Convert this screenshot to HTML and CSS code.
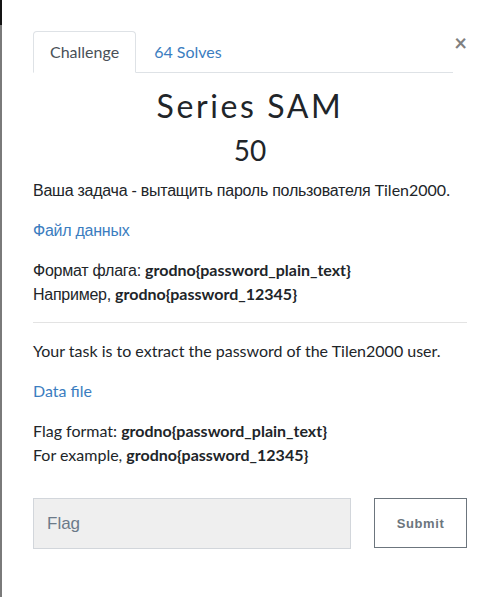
FILE: index.html
```html
<!DOCTYPE html>
<html lang="ru">
<head>
<meta charset="utf-8">
<title>Series SAM</title>
<link rel="stylesheet" href="styles.css">
</head>
<body>
<div class="modal">
  <div class="modal-header">
    <ul class="tabs">
      <li class="tab active">Challenge</li>
      <li class="tab"><a href="#">64 Solves</a></li>
    </ul>
    <button class="close" type="button">×</button>
  </div>
  <div class="modal-body">
    <h2 class="title">Series SAM</h2>
    <h3 class="value">50</h3>
    <div class="desc">
      <p><span class="cy">Ваша задача - вытащить пароль пользователя</span> Tilen2000.</p>
      <p><a href="#" class="cy">Файл данных</a></p>
      <p><span class="cy">Формат флага:</span> <strong>grodno{password_plain_text}</strong><br>
      <span class="cy">Например,</span> <strong>grodno{password_12345}</strong></p>
      <hr>
      <p>Your task is to extract the password of the Tilen2000 user.</p>
      <p><a href="#">Data file</a></p>
      <p>Flag format: <strong>grodno{password_plain_text}</strong><br>
      For example, <strong>grodno{password_12345}</strong></p>
    </div>
    <form class="submit-row">
      <input class="flag-input" type="text" placeholder="Flag">
      <button class="submit-btn" type="button">Submit</button>
    </form>
  </div>
</div>
</body>
</html>
```
FILE: styles.css
```css
html, body {
  margin: 0;
  padding: 0;
  height: 100%;
}
body {
  background: #fff;
  font-family: Lato, "Liberation Sans", Arial, sans-serif;
  font-size: 16px;
  line-height: 24px;
  color: #212529;
}
.modal {
  min-height: 100%;
  box-sizing: border-box;
  border-left: 2px solid #7a7a7a;
  background: #fff;
  padding: 31px 31px 0 31px;
  position: relative;
}
.modal::before {
  content: "";
  position: absolute;
  left: -2px;
  top: 0;
  width: 2px;
  height: 25px;
  background: #141414;
}
.modal-header {
  display: flex;
  align-items: flex-start;
}
.tabs {
  flex: 1;
  display: flex;
  list-style: none;
  margin: 0;
  padding: 0;
  border-bottom: 1px solid #dee2e6;
}
.tab {
  padding: 8px 16px;
  margin-bottom: -1px;
  border: 1px solid transparent;
  border-top-left-radius: 4px;
  border-top-right-radius: 4px;
}
.tab.active {
  color: #495057;
  border-color: #dee2e6 #dee2e6 #fff;
  background: #fff;
}
.tab a {
  color: #3b7dc0;
  text-decoration: none;
  margin-left: 1px;
}
.close {
  width: 14px;
  padding: 0;
  margin: 0;
  border: 0;
  background: none;
  font-family: Lato, sans-serif;
  font-size: 22px;
  font-weight: 700;
  line-height: 24px;
  color: #808080;
  text-align: right;
}
.modal-body {
  padding-top: 14px;
}
.title {
  margin: 0 0 8px;
  text-align: center;
  font-size: 32px;
  line-height: 38px;
  font-weight: 400;
  letter-spacing: 2.6px;
}
.value {
  margin: 0 0 11px;
  text-align: center;
  font-size: 28px;
  line-height: 34px;
  font-weight: 400;
}
.desc p {
  margin: 0 0 16px;
}
.desc strong {
  font-weight: 700;
}
.desc a {
  color: #3b7dc0;
  text-decoration: none;
}
.cy {
  font-family: "Liberation Sans", Arial, sans-serif;
  letter-spacing: -0.25px;
  line-height: 16px;
}
.desc hr {
  margin: 16px 0;
  border: 0;
  border-top: 1px solid #e3e3e3;
}
.submit-row {
  display: flex;
  gap: 23px;
  margin: 31px 0 0;
  align-items: flex-start;
}
.flag-input {
  width: 318px;
  height: 51px;
  box-sizing: border-box;
  background: #efefef;
  border: 1px solid #d2d6db;
  padding: 0 13px;
  font-family: "Liberation Sans", Arial, sans-serif;
  font-size: 17px;
  color: #495057;
  outline: none;
  border-radius: 0;
}
.flag-input::placeholder {
  color: #6c7a89;
}
.submit-btn {
  width: 93px;
  height: 50px;
  box-sizing: border-box;
  background: #fff;
  border: 1px solid #6c757d;
  border-radius: 0;
  font-family: "Liberation Sans", Arial, sans-serif;
  font-size: 13px;
  font-weight: 700;
  letter-spacing: 0.6px;
  color: #6c757d;
  padding: 0;
}
```
